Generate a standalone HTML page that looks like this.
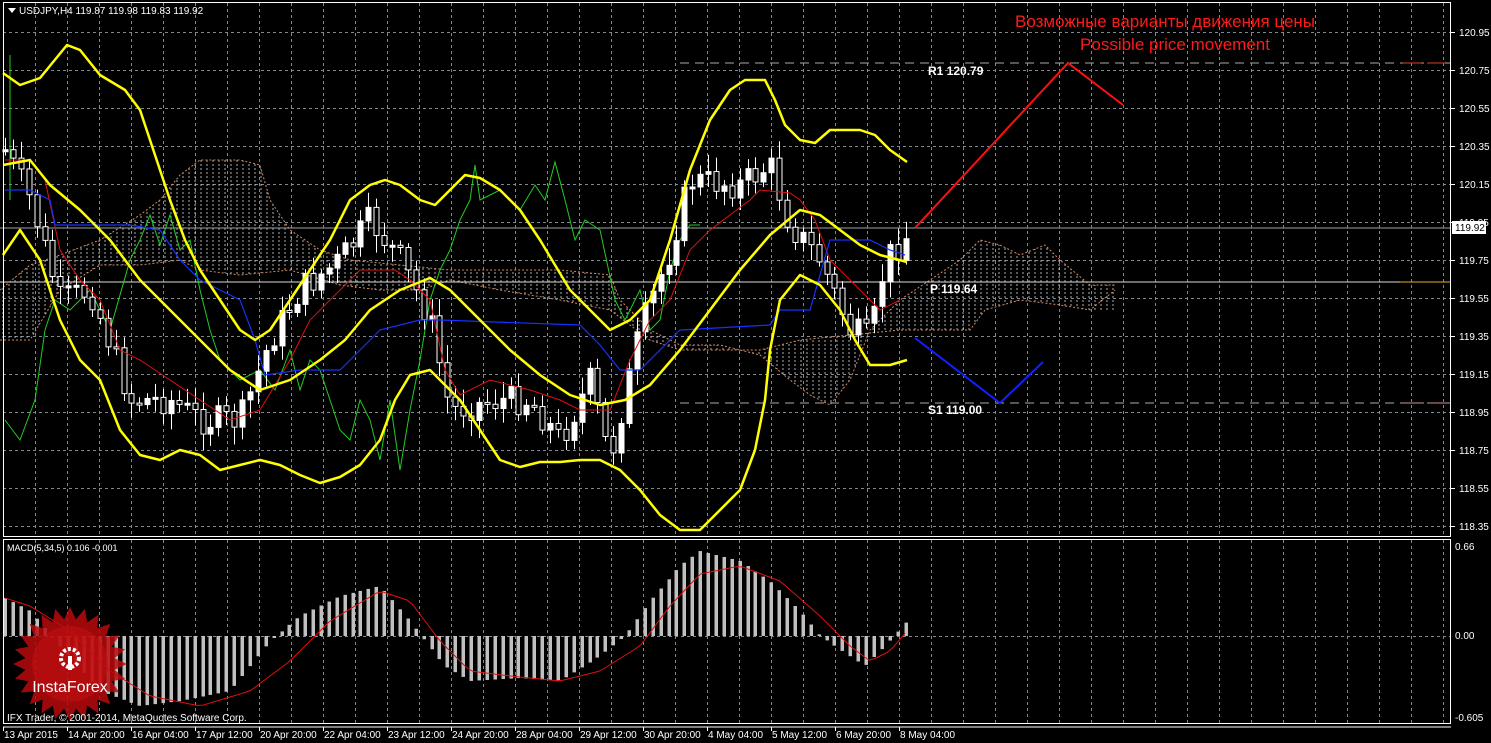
<!DOCTYPE html>
<html><head><meta charset="utf-8"><style>
html,body{margin:0;padding:0;background:#000;width:1491px;height:743px;overflow:hidden}
svg{display:block}
text{font-family:"Liberation Sans","DejaVu Sans",sans-serif}
</style></head><body>
<svg id="s" width="1491" height="743" viewBox="0 0 1491 743" xmlns="http://www.w3.org/2000/svg">
<defs>
<pattern id="hatch" width="6" height="4" patternUnits="userSpaceOnUse">
<line x1="3" y1="0" x2="3" y2="2" stroke="#d8d8d8" stroke-width="1"/>
</pattern>
</defs>
<rect width="1491" height="743" fill="#000"/>
<g id="grid" stroke="#7c8894" stroke-width="1" stroke-dasharray="3,3"></g>
<polygon fill="url(#hatch)" opacity="0.8" points="0,290 30,265 60,255 100,240 140,215 160,200 180,175 200,160 240,160 260,165 270,200 290,230 320,250 350,260 400,265 450,270 500,270 560,270 610,275 620,300 650,330 680,345 720,345 760,355 790,380 810,395 830,405 850,380 870,330 900,300 930,280 960,260 980,240 1000,245 1020,255 1045,245 1060,260 1090,285 1115,285 1115,310 1090,310 1060,305 1020,300 985,310 970,330 930,330 900,330 850,335 800,340 760,350 720,350 680,350 650,340 610,310 560,300 500,290 450,280 420,290 380,290 340,285 290,270 240,275 200,270 180,260 140,265 100,265 60,290 30,340 0,340"/>
<polyline fill="none" stroke="#d08a60" stroke-dasharray="2,2" points="0,290 30,265 60,255 100,240 140,215 160,200 180,175 200,160 240,160 260,165 270,200 290,230 320,250 350,260 400,265 450,270 500,270 560,270 610,275 620,300 650,330 680,345 720,345 760,355 790,380 810,395 830,405 850,380 870,330 900,300 930,280 960,260 980,240 1000,245 1020,255 1045,245 1060,260 1090,285 1115,285"/>
<polyline fill="none" stroke="#d08a60" stroke-dasharray="2,2" points="0,340 30,340 60,290 100,265 140,265 180,260 200,270 240,275 290,270 340,285 380,290 420,290 450,280 500,290 560,300 610,310 650,340 680,350 720,350 760,350 800,340 850,335 900,330 930,330 970,330 985,310 1020,300 1060,305 1090,310 1115,290"/>
<line x1="680" y1="63" x2="1451" y2="63" stroke="#aaa" stroke-dasharray="9,6"/>
<line x1="0" y1="282" x2="1451" y2="282" stroke="#ddd"/>
<line x1="680" y1="403" x2="1451" y2="403" stroke="#aaa" stroke-dasharray="9,6"/>
<line x1="0" y1="228" x2="1451" y2="228" stroke="#9aa0a8"/>
<line x1="1403" y1="63" x2="1448" y2="63" stroke="#e04020" stroke-dasharray="18,6"/>
<line x1="1403" y1="403" x2="1448" y2="403" stroke="#d09090" stroke-dasharray="18,6"/>
<line x1="1400" y1="282" x2="1451" y2="282" stroke="#e0b020"/>
<polyline fill="none" stroke="#22cc22" stroke-width="1" points="5,420 20,440 35,400 45,330 55,300 70,310 90,290 110,330 130,260 140,240 150,215 160,245 170,215 180,250 190,240 200,290 210,330 220,360 240,380 260,370 275,390 290,350 300,390 310,360 320,370 330,400 340,430 350,440 360,400 370,420 380,460 390,400 400,470 410,410 420,360 430,300 440,270 450,250 460,220 470,200 475,165 480,200 500,190 520,210 535,185 545,200 555,162 565,200 575,240 585,220 600,230 615,300 625,320 640,290 650,330 660,320 670,270 680,240 690,225 700,225"/>
<line x1="10" y1="55" x2="10" y2="200" stroke="#22cc22"/>
<g id="candles"></g>
<polyline fill="none" stroke="#e01010" stroke-width="1" points="5,160 30,160 45,180 60,250 80,280 100,300 120,350 140,360 170,380 200,400 230,420 260,410 290,360 310,320 330,300 360,270 395,270 410,280 430,300 445,370 460,395 490,380 530,390 560,400 580,410 610,410 630,360 650,320 670,300 690,250 710,230 730,215 750,200 760,190 790,193 800,200 815,220 830,260 850,280 870,300 880,310 900,300"/>
<polyline fill="none" stroke="#1530ff" stroke-width="1.2" points="5,190 30,190 50,200 55,225 80,225 130,225 160,230 180,260 200,280 220,290 240,300 255,340 265,375 300,370 340,370 350,360 380,330 420,320 440,320 580,325 600,345 620,370 640,370 680,330 770,325 780,310 810,310 830,240 870,240 890,250 905,255"/>
<g fill="none" stroke="#ffff00" stroke-width="2.5" stroke-linejoin="round">
<polyline points="3,73 20,85 40,78 67,45 80,50 100,75 125,90 140,110 150,140 160,170 170,200 185,240 200,270 220,300 240,330 255,340 270,330 290,300 310,270 330,240 350,200 370,185 385,180 400,185 420,200 435,205 450,190 465,175 480,178 500,190 520,210 540,240 555,265 570,290 590,310 610,330 630,320 650,300 670,240 690,170 710,120 730,90 745,80 765,80 775,100 785,125 800,140 815,143 830,130 860,130 875,135 890,150 907,162"/>
<polyline points="3,165 30,160 50,185 80,210 110,240 140,280 170,310 200,340 230,370 260,390 290,380 320,360 345,340 370,310 400,290 430,278 450,290 480,320 510,350 540,375 570,395 600,405 625,400 650,385 680,350 710,310 740,270 770,235 800,210 820,215 840,230 860,245 880,255 907,262"/>
<polyline points="3,255 20,230 40,260 60,320 80,360 100,380 120,430 140,455 160,460 180,450 200,455 220,470 240,465 260,460 280,465 300,475 320,483 340,477 360,465 380,440 395,400 410,375 430,370 440,380 460,400 480,430 500,460 520,467 540,462 560,462 580,460 600,460 620,470 640,490 660,515 680,530 700,530 720,510 740,490 755,450 765,400 770,350 780,300 800,275 820,285 840,310 855,340 870,365 890,365 907,360"/>
</g>
<polyline fill="none" stroke="#ff1010" stroke-width="2" points="915,228 1068,63 1123,105"/>
<polyline fill="none" stroke="#1020ff" stroke-width="2" points="915,338 1000,403 1043,362"/>
<g font-family="Liberation Mono,monospace" font-size="12" fill="#fff" font-weight="bold">
<text x="928" y="75">R1 120.79</text>
<text x="930" y="293">P 119.64</text>
<text x="928" y="414">S1 119.00</text>
</g>
<text x="1165" y="27" font-size="17" fill="#ff1a1a" text-anchor="middle">Возможные варианты движения цены</text>
<text x="1175" y="50" font-size="17" fill="#ff1a1a" text-anchor="middle">Possible price movement</text>
<g id="macd"></g>
<g transform="translate(70,664)">
<polygon id="star" fill="#b8090c" opacity="0.85"/>
<circle r="38" fill="#c81014" opacity="0.5"/>
<circle cx="0" cy="-6" r="9" fill="none" stroke="#fff" stroke-width="4" stroke-dasharray="3,2"/>
<rect x="-2" y="-8" width="4" height="14" fill="#fff"/>
<text x="0" y="28" font-size="16" fill="#fff" text-anchor="middle">InstaForex</text>
</g>
<rect x="3.5" y="2.5" width="1447" height="534" fill="none" stroke="#fff"/>
<rect x="3.5" y="539.5" width="1447" height="184" fill="none" stroke="#fff"/>
<line x1="3" y1="727" x2="1451" y2="727" stroke="#fff"/>
<g id="axis" font-size="10" fill="#fff"></g>
<rect x="1452" y="221" width="34" height="13" fill="#fff"/>
<text x="1455" y="231" font-size="10" fill="#000">119.92</text>
<polygon points="8,8 16,8 12,13" fill="#fff"/>
<text x="19" y="14" font-size="10" fill="#fff">USDJPY,H4  119.87 119.98 119.83 119.92</text>
<text x="7" y="551" font-size="9" fill="#fff">MACD(5,34,5) 0.106 -0.001</text>
<text x="7" y="721" font-size="10" fill="#fff">IFX Trader, © 2001-2014, MetaQuotes Software Corp.</text>
</svg>
<script>
(function(){
var NS="http://www.w3.org/2000/svg";
function el(p,t,a){var e=document.createElementNS(NS,t);for(var k in a)e.setAttribute(k,a[k]);p.appendChild(e);return e;}
var g=document.getElementById('grid');
for(var x=35;x<1451;x+=32)el(g,'line',{x1:x+.5,y1:3,x2:x+.5,y2:536});
for(var x=35;x<1451;x+=32)el(g,'line',{x1:x+.5,y1:540,x2:x+.5,y2:723});
var ax=document.getElementById('axis');
for(var i=0;i<14;i++){var y=32+i*38;el(g,'line',{x1:3,y1:y+.5,x2:1451,y2:y+.5});
 el(ax,'line',{x1:1451,y1:y+.5,x2:1455,y2:y+.5,stroke:'#fff'});
 var t=el(ax,'text',{x:1459,y:y+4});t.textContent=(120.95-i*0.2).toFixed(2);}
el(g,'line',{x1:3,y1:636.5,x2:1451,y2:636.5});
[[' 0.66',550],[' 0.00',639],['-0.605',721]].forEach(function(a){var t=el(ax,'text',{x:1455,y:a[1]});t.textContent=a[0];});
var tl=['13 Apr 2015','14 Apr 20:00','16 Apr 04:00','17 Apr 12:00','20 Apr 20:00','22 Apr 04:00','23 Apr 12:00','24 Apr 20:00','28 Apr 04:00','29 Apr 12:00','30 Apr 20:00','4 May 04:00','5 May 12:00','6 May 20:00','8 May 04:00'];
tl.forEach(function(l,i){var x=3+i*64;el(ax,'line',{x1:x+.5,y1:727,x2:x+.5,y2:731,stroke:'#fff'});var t=el(ax,'text',{x:x+1,y:738});t.textContent=l;});
function interp(pts,x){for(var i=1;i<pts.length;i++){if(x<=pts[i][0]){var a=pts[i-1],b=pts[i];return a[1]+(b[1]-a[1])*(x-a[0])/(b[0]-a[0]);}}return pts[pts.length-1][1];}
var P=[[5,150],[30,200],[60,300],[90,290],[130,400],[170,400],[200,420],[240,420],[270,340],[300,290],[340,260],[370,220],[400,260],[430,320],[450,410],[500,400],[530,400],[560,440],[590,380],[610,460],[640,330],[670,250],[690,180],[740,185],[770,165],[790,225],[820,260],[850,330],[870,340],[885,260],[907,235]];
var c=document.getElementById('candles'),prev=interp(P,5),seed=7;
function rnd(){seed=(seed*9301+49297)%233280;return seed/233280;}
for(var x=5;x<=907;x+=7.9){var cl=interp(P,x)+(rnd()-0.5)*30,op=prev,hi=Math.min(op,cl)-4-rnd()*14,lo=Math.max(op,cl)+4+rnd()*14,xx=Math.round(x)+.5;
 el(c,'line',{x1:xx,y1:hi,x2:xx,y2:lo,stroke:'#fff'});
 var by=Math.min(op,cl),bh=Math.max(2,Math.abs(op-cl));
 el(c,'rect',{x:xx-2.5,y:by,width:5,height:bh,fill:cl<op?'#fff':'#000',stroke:'#fff','stroke-width':1});prev=cl;}
var M=[[5,-38],[30,-25],[60,10],[100,55],[140,70],[180,65],[230,55],[270,5],[300,-20],[340,-40],[380,-50],[410,-15],[425,5],[445,30],[470,45],[520,42],[560,45],[600,20],[625,0],[650,-35],[680,-70],[700,-85],[740,-75],[770,-55],[800,-25],[820,0],[850,20],[865,30],[885,10],[907,-15]];
var S=[[5,-38],[30,-30],[70,-5],[110,35],[150,60],[200,70],[250,55],[290,25],[330,-15],[380,-45],[410,-35],[440,5],[470,35],[510,40],[560,45],[600,35],[640,10],[670,-30],[700,-62],[740,-70],[780,-55],[820,-20],[850,10],[870,25],[890,15],[907,-5]];
var m=document.getElementById('macd');
for(var x=5;x<=907;x+=7.9){var v=interp(M,x),xx=Math.round(x);el(m,'rect',{x:xx-1.5,y:v<0?636+v:636,width:3.5,height:Math.abs(v),fill:'#c0c0c0'});}
var pts=[];for(var x=5;x<=907;x+=6)pts.push(x+','+(636+interp(S,x)));
el(m,'polyline',{points:pts.join(' '),fill:'none',stroke:'#e01010','stroke-width':1});
var st=[];for(var i=0;i<48;i++){var a=i*Math.PI/24,r=i%2?45:57;st.push((r*Math.cos(a)).toFixed(1)+','+(r*Math.sin(a)).toFixed(1));}
document.getElementById('star').setAttribute('points',st.join(' '));
})();
</script>
</body></html>
